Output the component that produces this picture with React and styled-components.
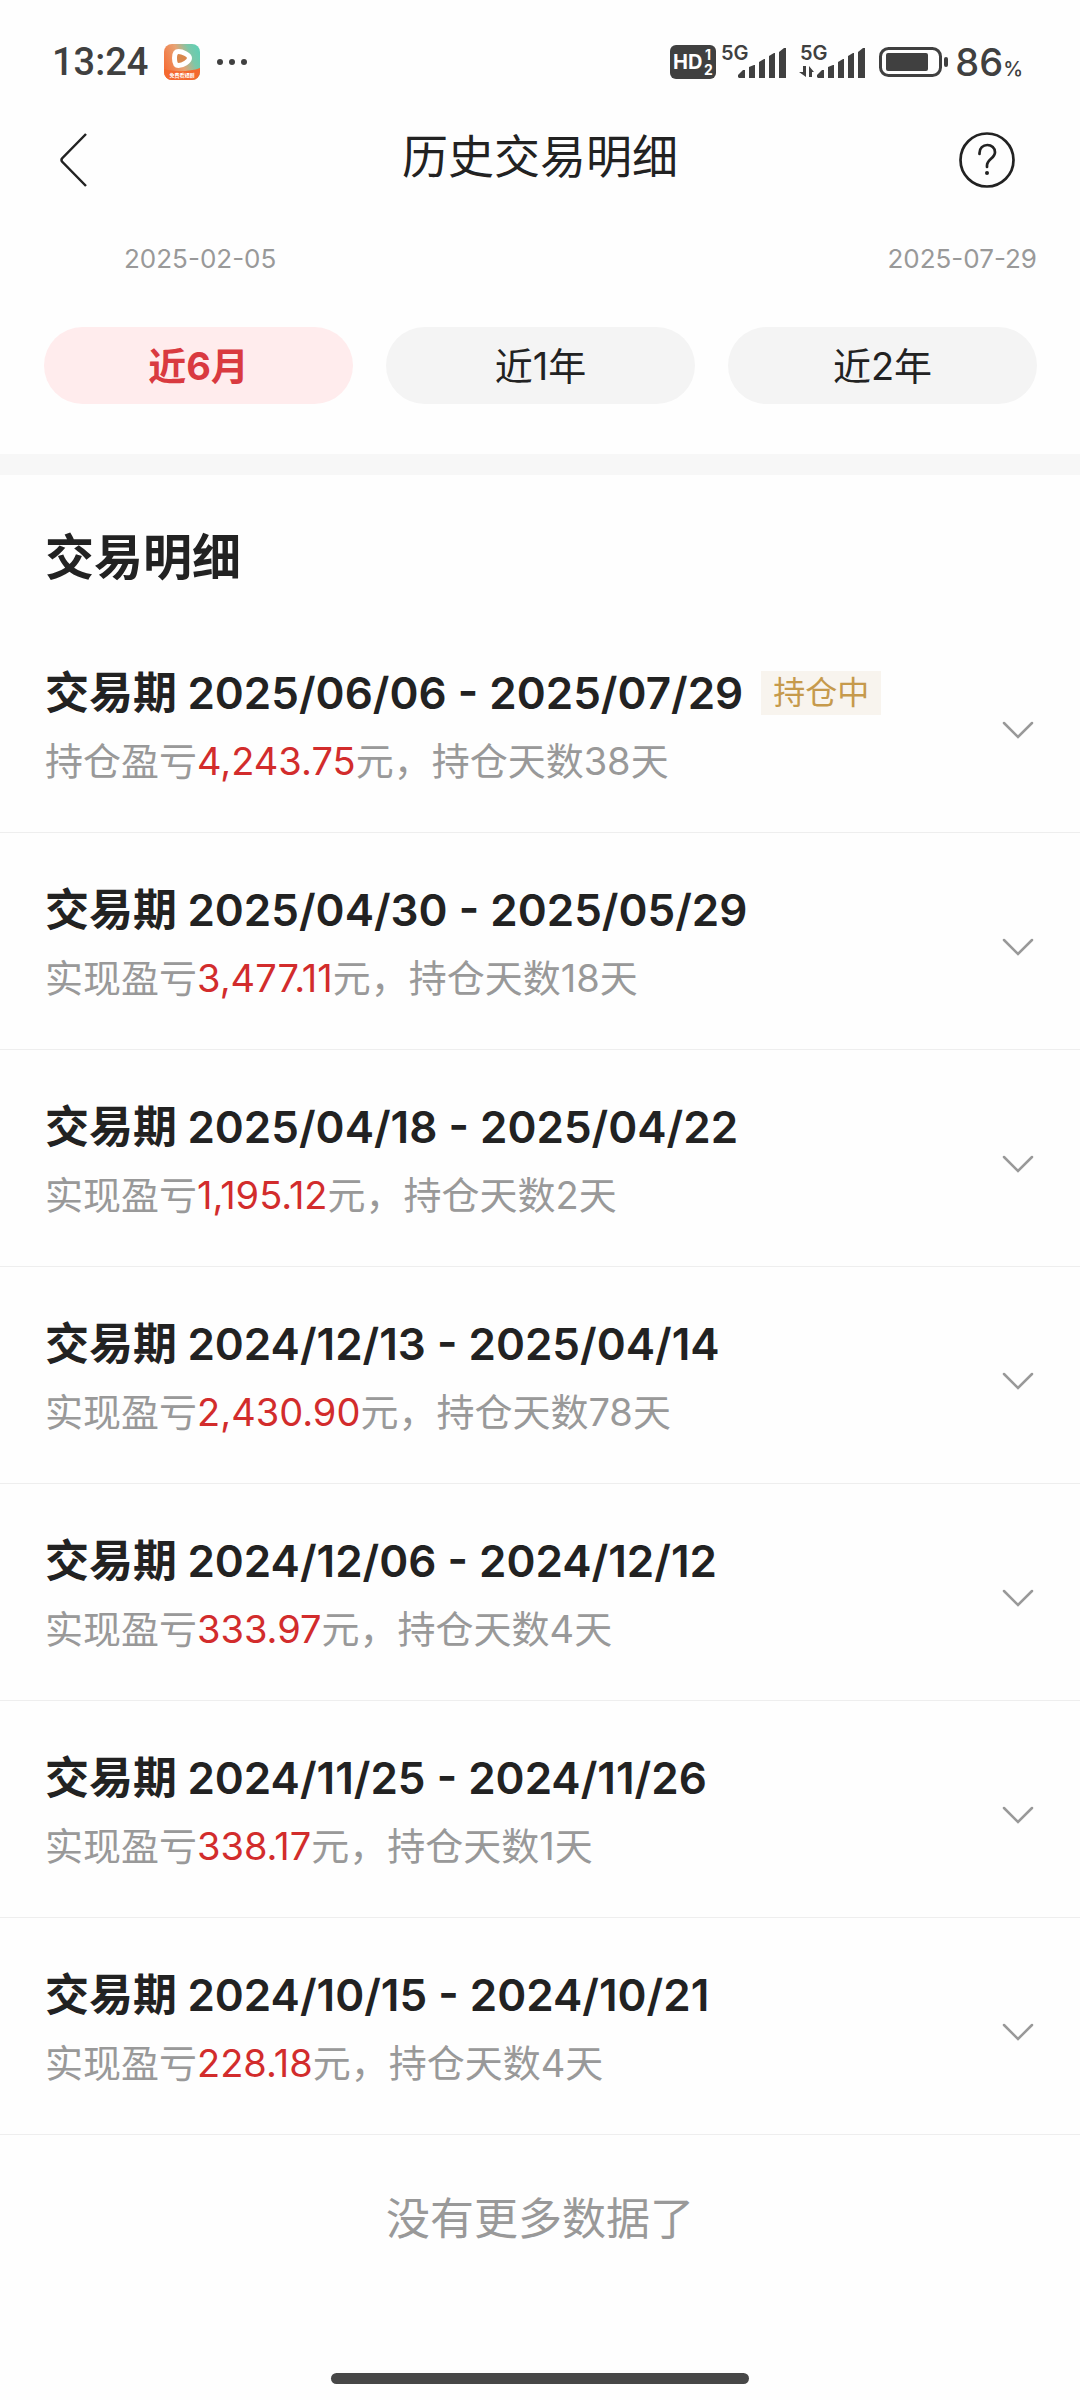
import { useState } from 'react';
import styled, { createGlobalStyle } from 'styled-components';

const GlobalStyle = createGlobalStyle`
  * {
    box-sizing: border-box;
  }
  body {
    margin: 0;
    background-color: #fefefe;
    color: #222;
    font-family: Inter, 'Noto Sans CJK SC', sans-serif;
  }
  button {
    padding: 0;
    border: none;
    background: none;
    color: inherit;
    font-family: inherit;
    cursor: pointer;
  }
`;

const Page = styled.div`
  display: flex;
  flex-direction: column;
  min-height: 100vh;
`;

const StatusBar = styled.div`
  display: flex;
  align-items: center;
  justify-content: space-between;
  height: 124px;
  padding: 0 57px 0 52px;
  color: #404040;
`;

const StatusGroup = styled.div`
  display: flex;
  align-items: center;
  gap: ${(props) => props.$gap}px;
`;

const Clock = styled.span`
  font-family: Roboto, sans-serif;
  font-size: 38px;
  line-height: 48px;
  font-weight: 500;
`;

const BatteryLevel = styled.span`
  font-size: 38px;
  line-height: 48px;
  font-weight: 500;
`;

const Percent = styled.small`
  font-size: 20px;
  line-height: 1;
`;

const Header = styled.header`
  display: grid;
  grid-template-columns: 66px 1fr 66px;
  align-items: center;
  height: 72px;
  padding: 0 60px;
`;

const HeaderTitle = styled.h1`
  margin: 0;
  padding-bottom: 8px;
  font-size: 46px;
  line-height: 60px;
  font-weight: 400;
  text-align: center;
`;

const IconButton = styled.button`
  display: flex;
  align-items: center;
  justify-content: ${(props) => props.$align || 'center'};
  height: 60px;
`;

const DateRange = styled.div`
  display: flex;
  justify-content: space-between;
  padding: 43px 43px 0 124px;
  color: #999;
  font-size: 26px;
  line-height: 40px;
`;

const Tabs = styled.div`
  display: grid;
  grid-template-columns: repeat(3, 1fr);
  gap: 33px;
  padding: 48px 43px 50px 44px;
  border-bottom: 21px solid #f7f7f7;
`;

const Tab = styled.button`
  && {
    height: 77px;
    border-radius: 39px;
    background-color: ${(props) => (props.$active ? '#ffeced' : '#f4f4f4')};
    color: ${(props) => (props.$active ? '#d93a40' : '#222')};
    font-size: 38px;
    font-weight: ${(props) => (props.$active ? 700 : 400)};
    line-height: 60px;
  }
`;

const SectionTitle = styled.h2`
  margin: 0;
  padding: 53px 45px 28px;
  font-size: 49px;
  line-height: 60px;
  font-weight: 700;
`;

const List = styled.ul`
  margin: 0;
  padding: 0;
  list-style: none;
`;

const Item = styled.li`
  border-bottom: 1px solid #eee;
`;

const ItemButton = styled.button`
  && {
    display: flex;
    align-items: center;
    justify-content: space-between;
    width: 100%;
    padding: 47px 45px 41px;
    text-align: left;
  }
`;

const ItemText = styled.span`
  display: flex;
  flex-direction: column;
  gap: 8px;
`;

const Period = styled.span`
  display: flex;
  align-items: center;
  font-size: 44px;
  line-height: 60px;
  font-weight: 700;
  white-space: pre;
`;

const PeriodDates = styled.span`
  font-weight: 600;
`;

const Badge = styled.span`
  margin-left: 18px;
  padding: 0 12px;
  background-color: #f8f4ee;
  color: #c69a4c;
  font-size: 32px;
  line-height: 44px;
  font-weight: 400;
`;

const Summary = styled.span`
  color: #999;
  font-size: 38px;
  line-height: 60px;
`;

const Amount = styled.span`
  color: #d22c2c;
`;

const NoMore = styled.p`
  margin: 0;
  padding: 54px 0;
  color: #999;
  font-size: 44px;
  line-height: 60px;
  text-align: center;
`;

const HomeBar = styled.div`
  width: 418px;
  height: 11px;
  margin: auto auto 16px;
  border-radius: 6px;
  background-color: #474747;
`;

const AppIcon = () => (
  <svg width="36" height="36" viewBox="0 0 36 36" aria-hidden="true">
    <defs>
      <linearGradient id="appBg" x1="0" y1="0.6" x2="1" y2="0.2">
        <stop offset="0" stopColor="#f5703a" />
        <stop offset="0.45" stopColor="#e8a374" />
        <stop offset="0.75" stopColor="#7cc7a8" />
        <stop offset="1" stopColor="#5fcfb4" />
      </linearGradient>
    </defs>
    <rect width="36" height="36" rx="8" fill="url(#appBg)" />
    <path d="M0 25c10 3 26 3 36-1v4a8 8 0 0 1-8 8H8a8 8 0 0 1-8-8z" fill="#f4692f" />
    <path
      d="M14.500 7.500c-3 0-4 3-4 6.500s1 7.500 4 7.500c4 0 11-4 11-7.500 0-3-7-6.500-11-6.500z"
      fill="#d9874c"
      stroke="#fff"
      strokeWidth="5"
      strokeLinejoin="round"
    />
    <text x="18" y="33" fill="#fff" fontSize="5" fontWeight="700" textAnchor="middle">
      免费看短剧
    </text>
  </svg>
);

const MoreDots = () => (
  <svg width="32" height="8" viewBox="0 0 32 8" fill="currentColor" aria-hidden="true">
    <circle cx="4" cy="4" r="3" />
    <circle cx="16" cy="4" r="3" />
    <circle cx="28" cy="4" r="3" />
  </svg>
);

const HdIcon = () => (
  <svg width="46" height="34" viewBox="0 0 46 34" fill="#fff" fontWeight="700" aria-hidden="true">
    <rect width="46" height="34" rx="6" fill="#404040" />
    <text x="3" y="24" fontSize="20">
      HD
    </text>
    <text x="35" y="15" fontSize="14">
      1
    </text>
    <text x="34" y="30" fontSize="14">
      2
    </text>
  </svg>
);

const SignalIcon = ({ transfer }) => (
  <svg
    width={transfer ? 68 : 72}
    height="46"
    viewBox={transfer ? '-2 -6 68 46' : '0 -6 72 46'}
    fill="#404040"
    aria-hidden="true"
  >
    <text x="0" y="15" fontSize="20" fontWeight="600">
      5G
    </text>
    <path d="M17 32v-2l5-5h2v8h-6z" />
    <path d="M28 33V22l5-2h1v13z" />
    <path d="M38 33V17l5-3h1v19z" />
    <path d="M48 33V11l5-3h1v25z" />
    <path d="M58 33V7l5-4h2v30z" />
    {transfer && <path d="M3 21h3v11L-1 27h4zM9 32V21l5 6h-2v5z" />}
  </svg>
);

const BatteryIcon = () => (
  <svg width="70" height="32" viewBox="0 0 70 32" aria-hidden="true">
    <rect x="1.500" y="2.500" width="60" height="27" rx="8" fill="none" stroke="#404040" strokeWidth="3" />
    <rect x="7" y="7" width="42" height="18" rx="2" fill="#404040" />
    <rect x="65" y="11" width="4" height="10" rx="2" fill="#404040" />
  </svg>
);

const BackIcon = () => (
  <svg width="28" height="56" viewBox="1 0 28 56" fill="none" stroke="#222" strokeWidth="2.500" aria-hidden="true">
    <path d="M27 2L3 26.500Q2 28 3 29.500L27 54" />
  </svg>
);

const HelpIcon = () => (
  <svg width="56" height="56" viewBox="0 0 56 56" fill="none" stroke="#222" strokeWidth="2.700" aria-hidden="true">
    <circle cx="28" cy="28" r="26.500" />
    <path d="M20.500 22v-1c0-5 3.500-8 7.800-8s7.700 3 7.700 7.200c0 6-8 7.300-8 13.300v1.500" strokeLinecap="round" />
    <circle cx="28" cy="41" r="2" fill="#222" stroke="none" />
  </svg>
);

const ChevronDown = () => (
  <svg width="34" height="28" viewBox="0 0 34 28" fill="none" stroke="#999" strokeWidth="2.500" aria-hidden="true">
    <path d="M3 10L17 24L31 10" strokeLinecap="round" />
  </svg>
);

const ranges = ['近6月', '近1年', '近2年'];

const trades = [
  { from: '2025/06/06', to: '2025/07/29', label: '持仓盈亏', amount: '4,243.75', days: 38, holding: true },
  { from: '2025/04/30', to: '2025/05/29', label: '实现盈亏', amount: '3,477.11', days: 18 },
  { from: '2025/04/18', to: '2025/04/22', label: '实现盈亏', amount: '1,195.12', days: 2 },
  { from: '2024/12/13', to: '2025/04/14', label: '实现盈亏', amount: '2,430.90', days: 78 },
  { from: '2024/12/06', to: '2024/12/12', label: '实现盈亏', amount: '333.97', days: 4 },
  { from: '2024/11/25', to: '2024/11/26', label: '实现盈亏', amount: '338.17', days: 1 },
  { from: '2024/10/15', to: '2024/10/21', label: '实现盈亏', amount: '228.18', days: 4 },
];

const TradeItem = ({ from, to, label, amount, days, holding }) => (
  <Item>
    <ItemButton type="button">
      <ItemText>
        <Period>
          {'交易期 '}
          <PeriodDates>
            {from} - {to}
          </PeriodDates>
          {holding && <Badge>持仓中</Badge>}
        </Period>
        <Summary>
          {label}
          <Amount>{amount}</Amount>元，持仓天数{days}天
        </Summary>
      </ItemText>
      <ChevronDown />
    </ItemButton>
  </Item>
);

const App = () => {
  const [range, setRange] = useState(ranges[0]);

  return (
    <Page>
      <GlobalStyle />
      <StatusBar>
        <StatusGroup $gap={16}>
          <Clock>13:24</Clock>
          <AppIcon />
          <MoreDots />
        </StatusGroup>
        <StatusGroup $gap={13}>
          <StatusGroup $gap={5}>
            <HdIcon />
            <SignalIcon />
            <SignalIcon transfer />
          </StatusGroup>
          <StatusGroup $gap={6}>
            <BatteryIcon />
            <BatteryLevel>
              86<Percent>%</Percent>
            </BatteryLevel>
          </StatusGroup>
        </StatusGroup>
      </StatusBar>

      <Header>
        <IconButton type="button" $align="flex-start" aria-label="返回">
          <BackIcon />
        </IconButton>
        <HeaderTitle>历史交易明细</HeaderTitle>
        <IconButton type="button" aria-label="帮助">
          <HelpIcon />
        </IconButton>
      </Header>

      <DateRange>
        <span>2025-02-05</span>
        <span>2025-07-29</span>
      </DateRange>

      <Tabs>
        {ranges.map((item) => (
          <Tab key={item} type="button" $active={item === range} onClick={() => setRange(item)}>
            {item}
          </Tab>
        ))}
      </Tabs>

      <SectionTitle>交易明细</SectionTitle>
      <List>
        {trades.map((trade) => (
          <TradeItem key={trade.from} {...trade} />
        ))}
      </List>
      <NoMore>没有更多数据了</NoMore>
      <HomeBar />
    </Page>
  );
};

export default App;
